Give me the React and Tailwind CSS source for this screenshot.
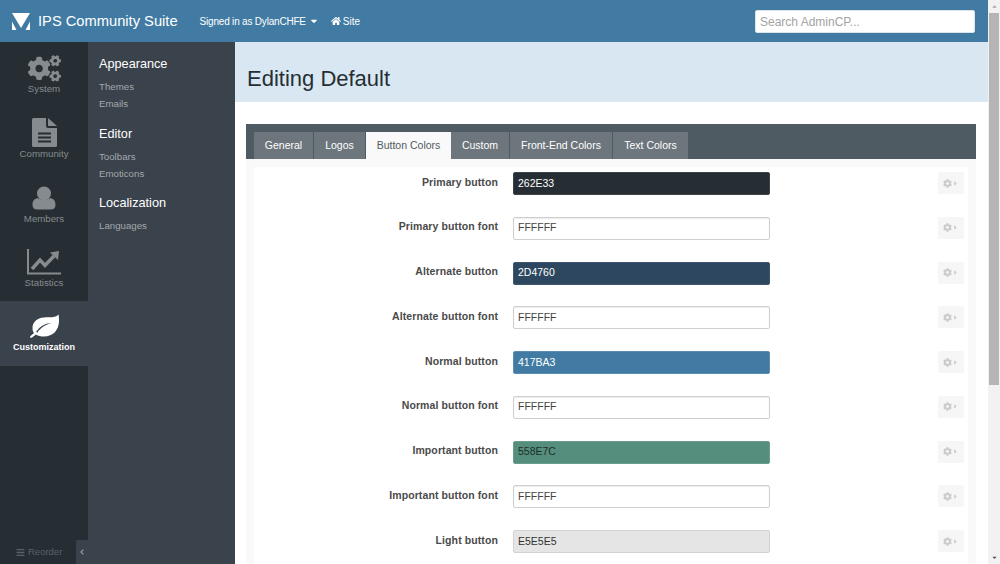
import React from 'react';
import { FaCogs, FaHome, FaBars, FaCog, FaCaretRight, FaCaretDown, FaCaretUp, FaChevronLeft } from 'react-icons/fa';

const FileIcon = () => (
  <svg width="25" height="29" viewBox="0 0 25 29" fill="currentColor">
    <path d="M1.500 0H14V8Q14 10 16 10H25V27.500Q25 29 23.500 29H1.500Q0 29 0 27.500V1.500Q0 0 1.500 0Z" />
    <path d="M16 0L25 8H16Z" />
    <path d="M6 14.500H19V16.500H6ZM6 18.500H19V20.500H6ZM6 22.500H19V24.500H6Z" fill="#262e33" />
  </svg>
);

const UserIcon = () => (
  <svg width="24" height="24" viewBox="0 0 24 24" fill="currentColor">
    <circle cx="12" cy="7.500" r="7" />
    <path d="M0.500 19C0.500 15 2 13 5.500 12C7.500 14 16.500 14 18.500 12C22 13 23.500 15 23.500 19C23.500 22 21.500 23.500 19 23.500H5C2.500 23.500 0.500 22 0.500 19Z" />
  </svg>
);

const StatsIcon = () => (
  <svg width="34" height="26" viewBox="0 0 34 26" fill="currentColor">
    <path d="M1 0V24.500H34" fill="none" stroke="currentColor" strokeWidth="2" />
    <path d="M5 20L13 11L18 16.500L27 7" fill="none" stroke="currentColor" strokeWidth="3.500" />
    <path d="M23 3.500L32 2L31 11Z" />
  </svg>
);

const LeafIcon = () => (
  <svg width="31" height="26" viewBox="0 0 31 26" className="mb-[3px]">
    <path
      d="M29.500 1.500C27 5 20 4 15 4.500C8 5 3.500 9 3.500 15C3.500 17 4 19 5 20L1.500 23C0.500 24 1.500 25.500 3 24.500L7 21.500C9 23 12 23.500 15 23.500C24 23.500 30 17 30 8C30 5.500 30 3 29.500 1.500Z"
      fill="#ffffff"
    />
    <path d="M7 19C11 13 17 10 23 10C17 11.500 12 14 8.500 19.500Z" fill="#3a424b" />
  </svg>
);

const navItems = [
  { label: 'System', icon: <FaCogs className="text-[33px]" /> },
  { label: 'Community', icon: <FileIcon /> },
  { label: 'Members', icon: <UserIcon /> },
  { label: 'Statistics', icon: <StatsIcon /> },
  { label: 'Customization', icon: <LeafIcon />, active: true },
];

const subMenu = [
  { title: 'Appearance', links: ['Themes', 'Emails'] },
  { title: 'Editor', links: ['Toolbars', 'Emoticons'] },
  { title: 'Localization', links: ['Languages'] },
];

const tabs = [
  { label: 'General', width: 'w-[60px]' },
  { label: 'Logos', width: 'w-[52px]' },
  { label: 'Button Colors', width: 'w-[85px]', active: true },
  { label: 'Custom', width: 'w-[59px]' },
  { label: 'Front-End Colors', width: 'w-[103px]' },
  { label: 'Text Colors', width: 'w-[76px]' },
];

const fields = [
  { label: 'Primary button', value: '262E33', bg: 'bg-[#262e33]', text: 'text-white', border: 'border-[#3e454a]' },
  { label: 'Primary button font', value: 'FFFFFF' },
  { label: 'Alternate button', value: '2D4760', bg: 'bg-[#2d4760]', text: 'text-white', border: 'border-[#3f566d]' },
  { label: 'Alternate button font', value: 'FFFFFF' },
  { label: 'Normal button', value: '417BA3', bg: 'bg-[#417ba3]', text: 'text-white', border: 'border-[#5a8db0]' },
  { label: 'Normal button font', value: 'FFFFFF' },
  { label: 'Important button', value: '558E7C', bg: 'bg-[#558e7c]', text: 'text-[#1c2f29]', border: 'border-[#6b9d8d]' },
  { label: 'Important button font', value: 'FFFFFF' },
  { label: 'Light button', value: 'E5E5E5', bg: 'bg-[#e5e5e5]', text: 'text-[#333333]', border: 'border-[#d2d2d2]' },
];

const Logo = () => (
  <svg width="18" height="17" viewBox="0 0 18 17" className="shrink-0">
    <path d="M0 0H18L9 15Z" fill="#ffffff" />
    <path d="M0 8.500L4.500 17H0ZM18 8.500L13.500 17H18Z" fill="#ffffff" />
  </svg>
);

const App = () => {
  return (
    <div className="flex h-[564px] w-[1000px] overflow-hidden bg-white font-['Liberation_Sans',Arial,sans-serif]">
      <div className="flex w-[988px] shrink-0 flex-col">
        {/* Top bar */}
        <div className="flex h-[42px] shrink-0 items-center bg-[#417ba3] pl-[12px] pr-[13px]">
          <Logo />
          <span className="ml-[8px] text-[14.700px] text-white">IPS Community Suite</span>
          <span className="ml-[22px] flex items-center text-[10px] tracking-[-0.2px] text-white">
            Signed in as DylanCHFE
            <FaCaretDown className="ml-[3px] text-[10px]" />
          </span>
          <span className="ml-[12px] flex items-center text-[10px] text-white">
            <FaHome className="mr-[2px] text-[10px]" />
            Site
          </span>
          <div className="ml-auto mt-[1px] flex h-[23px] w-[220px] items-center rounded-[2px] border border-[#dce4ea] bg-white px-[4px] text-[12px] text-[#a3a3a3]">
            Search AdminCP...
          </div>
        </div>

        <div className="flex min-h-0 flex-1">
          {/* Primary nav */}
          <div className="relative flex w-[88px] shrink-0 flex-col bg-[#262e33]">
            {navItems.map((item) => (
              <div
                key={item.label}
                className={`flex h-[64.750px] flex-col items-center pt-[9px] ${item.active ? 'bg-[#3a424b] text-white' : 'text-[#858b8f]'}`}
              >
                <div className="flex h-[34px] items-center justify-center">{item.icon}</div>
                <span className={`-mt-[3px] leading-[13px] ${item.active ? 'text-[9px] font-bold' : 'text-[9.700px]'}`}>{item.label}</span>
              </div>
            ))}
            <div className="mt-auto flex h-[24px] items-center pl-[16px] text-[9.500px] text-[#596168]">
              <FaBars className="mr-[3px] text-[9px]" />
              Reorder
            </div>
            <div className="absolute bottom-0 right-0 flex h-[24px] w-[12px] items-center justify-center rounded-tl-[2px] bg-[#3a424b]">
              <FaChevronLeft className="text-[6px] text-[#a9aeb2]" />
            </div>
          </div>

          {/* Secondary nav */}
          <div className="w-[147px] shrink-0 bg-[#3a424b] pl-[11px] pt-[15px]">
            {subMenu.map((group) => (
              <div key={group.title} className="mb-[14.500px]">
                <div className="text-[12.700px] leading-[15px] text-white">{group.title}</div>
                <div className="mt-[6px]">
                  {group.links.map((link) => (
                    <div key={link} className="h-[17px] text-[9.700px] leading-[17px] text-[#a4a8ab]">{link}</div>
                  ))}
                </div>
              </div>
            ))}
          </div>

          {/* Main */}
          <div className="min-w-0 flex-1 overflow-hidden bg-white">
            <div className="flex h-[60px] items-center bg-[#d9e7f3] pl-[12px] pt-[12px] text-[22px] text-[#262e33]">
              Editing Default
            </div>
            <div className="ml-[11px] mr-[12px] mt-[22px]">
              <div className="flex h-[35px] items-end bg-[#4f5b62] pl-[8px]">
                {tabs.map((tab) => (
                  <div
                    key={tab.label}
                    className={`flex h-[27px] items-center justify-center text-[10.500px] ${tab.width} ${tab.active ? 'bg-[#f9f9f9] text-[#4f5b62]' : 'border-r border-[#4f5b62] bg-[#6c767c] text-white'}`}
                  >
                    {tab.label}
                  </div>
                ))}
              </div>
              <div className="bg-[#f9f9f9] px-[8px] pt-[8px]">
                <div className="bg-white">
                  {fields.map((field) => (
                    <div key={field.label} className="flex h-[44.750px] items-start pt-[5px]">
                      <div className="-mt-[1px] flex h-[23px] w-[244px] shrink-0 items-center justify-end text-[10.500px] font-bold tracking-[0.1px] text-[#4a4a4a]">
                        {field.label}
                      </div>
                      <div
                        className={`ml-[15px] flex h-[23px] w-[257px] shrink-0 items-center rounded-[2px] border px-[4px] text-[10.500px] ${field.bg || 'bg-white shadow-[inset_0_1px_1px_rgba(0,0,0,0.08)]'} ${field.text || 'text-[#444444]'} ${field.border || 'border-[#cfcfcf]'}`}
                      >
                        {field.value}
                      </div>
                      <div className="ml-auto mr-[4px] flex h-[22px] w-[26px] items-center justify-center rounded-[2px] bg-[#f6f6f6] text-[#cbcbcb]">
                        <FaCog className="text-[9px]" />
                        <FaCaretRight className="text-[7px]" />
                      </div>
                    </div>
                  ))}
                </div>
              </div>
            </div>
          </div>
        </div>
      </div>

      {/* Scrollbar */}
      <div className="flex w-[12px] shrink-0 flex-col items-center bg-[#f2f2f2]">
        <div className="flex h-[13px] items-center justify-center">
          <FaCaretUp className="text-[7px] text-[#a8a8a8]" />
        </div>
        <div className="h-[372px] w-[10px] bg-[#b5b5b5]" />
        <div className="mt-auto flex h-[13px] items-center justify-center">
          <FaCaretDown className="text-[7px] text-[#505050]" />
        </div>
      </div>
    </div>
  );
};

export default App;
